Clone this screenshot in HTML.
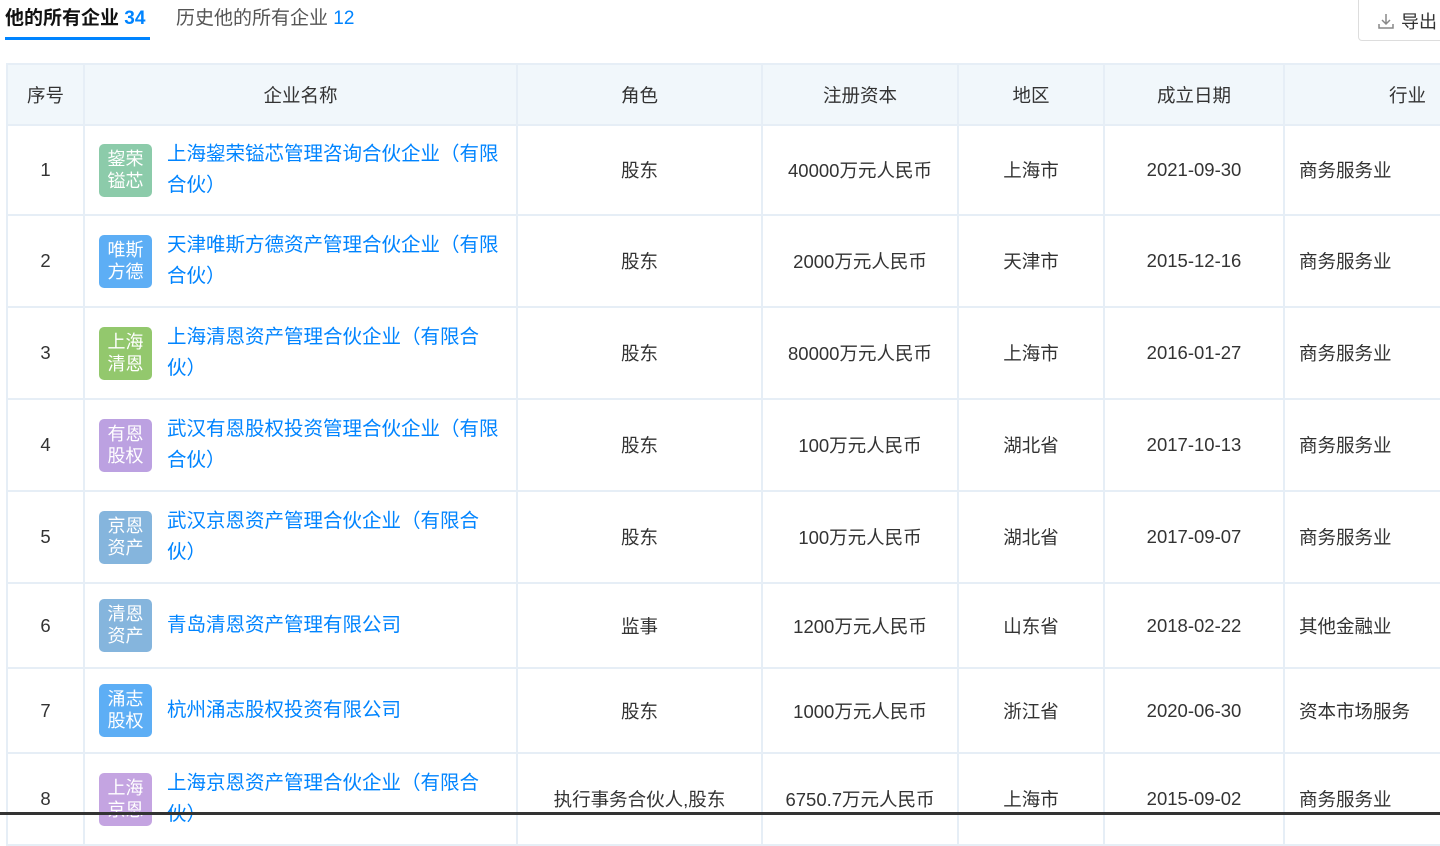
<!DOCTYPE html>
<html><head><meta charset="utf-8"><style>
*{box-sizing:border-box;margin:0;padding:0}
body{width:1440px;height:815px;overflow:hidden;background:#fff;font-family:"Liberation Sans","Noto Sans CJK SC",sans-serif;color:#333;position:relative}
.tab{position:absolute;top:6px;font-size:19px;line-height:26px}
.tab b{color:#0084ff}
.t1{left:5px;font-weight:bold;color:#111}
.t1 b{font-weight:bold}
.t2{left:176px;color:#555}
.t2 b{font-weight:normal}
.ul{position:absolute;left:5px;top:37px;width:145px;height:3px;background:#0084ff}
.exp{position:absolute;left:1358px;top:-4px;width:100px;height:45px;border:1px solid #ddd;border-radius:4px;font-size:18px;color:#333;padding:11px 0 0 18px}
.exp svg{vertical-align:-2px;margin-right:6px}
table{position:absolute;left:6px;top:63px;border-collapse:collapse;table-layout:fixed;width:1460px}
td,th{border:2px solid #e6eef6;font-size:18.5px;text-align:center;font-weight:normal;color:#333;vertical-align:middle}
th{background:#f1f7fb;height:61px}
td{background:#fff}
.nm{text-align:left;padding-left:14px}
.nm div{display:flex;align-items:center}
.lg{flex:none;width:53px;height:53px;border-radius:5px;color:#fff;font-size:18px;line-height:22px;text-align:center;padding-top:4px;margin-right:15px;opacity:.95}
.nm a{color:#0084ff;text-decoration:none;line-height:31px;width:338px;font-size:19.5px}
.ind{text-align:left;padding-left:14px}
.bar{position:absolute;left:0;top:812px;width:1440px;height:3px;background:#333}
</style></head><body>
<div class="tab t1">他的所有企业 <b>34</b></div>
<div class="tab t2">历史他的所有企业 <b>12</b></div>
<div class="ul"></div>
<div class="exp"><svg width="18" height="18" viewBox="0 0 18 18" fill="none" stroke="#888" stroke-width="1.5"><path d="M9 2v10M5 8l4 4 4-4M2 12v4h14v-4"/></svg>导出</div>
<table>
<colgroup><col style="width:77px"><col style="width:433px"><col style="width:245px"><col style="width:196px"><col style="width:146px"><col style="width:180px"><col style="width:183px"></colgroup>
<tr><th>序号</th><th>企业名称</th><th>角色</th><th>注册资本</th><th>地区</th><th>成立日期</th><th style="text-align:left;padding-left:104px">行业</th></tr>
<tr style="height:90px"><td>1</td><td class="nm"><div><span class="lg" style="background:#86c9a6">鋆荣<br>镒芯</span><a>上海鋆荣镒芯管理咨询合伙企业（有限合伙）</a></div></td><td>股东</td><td>40000万元人民币</td><td>上海市</td><td>2021-09-30</td><td class="ind">商务服务业</td></tr>
<tr style="height:92px"><td>2</td><td class="nm"><div><span class="lg" style="background:#55aaf5">唯斯<br>方德</span><a>天津唯斯方德资产管理合伙企业（有限合伙）</a></div></td><td>股东</td><td>2000万元人民币</td><td>天津市</td><td>2015-12-16</td><td class="ind">商务服务业</td></tr>
<tr style="height:92px"><td>3</td><td class="nm"><div><span class="lg" style="background:#8ec666">上海<br>清恩</span><a>上海清恩资产管理合伙企业（有限合<br>伙）</a></div></td><td>股东</td><td>80000万元人民币</td><td>上海市</td><td>2016-01-27</td><td class="ind">商务服务业</td></tr>
<tr style="height:92px"><td>4</td><td class="nm"><div><span class="lg" style="background:#b99de0">有恩<br>股权</span><a>武汉有恩股权投资管理合伙企业（有限合伙）</a></div></td><td>股东</td><td>100万元人民币</td><td>湖北省</td><td>2017-10-13</td><td class="ind">商务服务业</td></tr>
<tr style="height:92px"><td>5</td><td class="nm"><div><span class="lg" style="background:#7fb2dc">京恩<br>资产</span><a>武汉京恩资产管理合伙企业（有限合<br>伙）</a></div></td><td>股东</td><td>100万元人民币</td><td>湖北省</td><td>2017-09-07</td><td class="ind">商务服务业</td></tr>
<tr style="height:85px"><td>6</td><td class="nm"><div><span class="lg" style="background:#7fb2dc">清恩<br>资产</span><a>青岛清恩资产管理有限公司</a></div></td><td>监事</td><td>1200万元人民币</td><td>山东省</td><td>2018-02-22</td><td class="ind">其他金融业</td></tr>
<tr style="height:85px"><td>7</td><td class="nm"><div><span class="lg" style="background:#55aaf5">涌志<br>股权</span><a>杭州涌志股权投资有限公司</a></div></td><td>股东</td><td>1000万元人民币</td><td>浙江省</td><td>2020-06-30</td><td class="ind">资本市场服务</td></tr>
<tr style="height:92px"><td>8</td><td class="nm"><div><span class="lg" style="background:#c1a0e0">上海<br>京恩</span><a>上海京恩资产管理合伙企业（有限合<br>伙）</a></div></td><td>执行事务合伙人,股东</td><td>6750.7万元人民币</td><td>上海市</td><td>2015-09-02</td><td class="ind">商务服务业</td></tr>
</table>
<div class="bar"></div>
</body></html>
